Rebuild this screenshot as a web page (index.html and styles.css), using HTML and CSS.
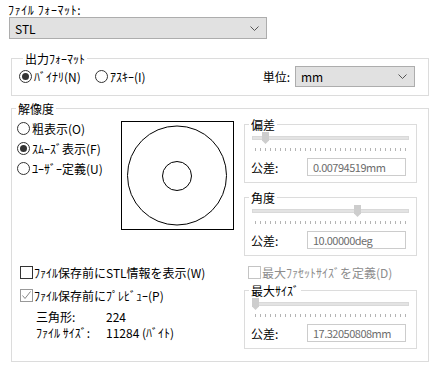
FILE: index.html
```html
<!DOCTYPE html>
<html lang="ja">
<head>
<meta charset="utf-8">
<link rel="stylesheet" href="styles.css">
</head>
<body>
<div class="file-label">ﾌｧｲﾙ ﾌｫｰﾏｯﾄ:</div>
<div class="select select-file"><span>STL</span><svg class="chev" width="9" height="5" viewBox="0 0 9 5"><polyline points="0.5,0.5 4.5,4.5 8.5,0.5" fill="none" stroke="#555" stroke-width="1"/></svg></div>

<fieldset class="grp grp-out">
  <legend>出力ﾌｫｰﾏｯﾄ</legend>
  <div class="out-row">
    <label class="radio r-bin"><span class="rb on"></span>ﾊﾞｲﾅﾘ(N)</label>
    <label class="radio"><span class="rb"></span>ｱｽｷｰ(I)</label>
    <span class="unit">単位:</span>
    <div class="select select-unit"><span>mm</span><svg class="chev" width="9" height="5" viewBox="0 0 9 5"><polyline points="0.5,0.5 4.5,4.5 8.5,0.5" fill="none" stroke="#555" stroke-width="1"/></svg></div>
  </div>
</fieldset>

<fieldset class="grp grp-res">
  <legend>解像度</legend>
  <div class="res-grid">
    <div class="res-left">
      <div class="radios">
        <label class="radio rrow"><span class="rb"></span>粗表示(O)</label>
        <label class="radio rrow"><span class="rb on"></span>ｽﾑｰｽﾞ表示(F)</label>
        <label class="radio rrow"><span class="rb"></span>ﾕｰｻﾞｰ定義(U)</label>
      </div>
      <svg class="preview" width="113" height="109" viewBox="0 0 113 109">
        <rect x="0.5" y="0.5" width="112" height="108" fill="#fff" stroke="#000"/>
        <circle cx="56" cy="54.5" r="49.5" fill="none" stroke="#000"/>
        <circle cx="56" cy="55" r="14.5" fill="none" stroke="#000"/>
      </svg>
    </div>
    <div class="res-right">
      <fieldset class="grp sub sub-dev">
        <legend>偏差</legend>
        <div class="slider"><div class="track"></div><svg class="thumb" style="left:10px" width="7" height="12" viewBox="0 0 7 12"><polygon points="0,0 7,0 7,8.5 3.5,12 0,8.5" fill="#cdcdcd"/></svg></div>
        <div class="ticks"></div>
        <div class="tol-row"><span class="tol">公差:</span><div class="field">0.00794519mm</div></div>
      </fieldset>
      <fieldset class="grp sub sub-ang">
        <legend>角度</legend>
        <div class="slider"><div class="track"></div><svg class="thumb" style="left:102px" width="7" height="12" viewBox="0 0 7 12"><polygon points="0,0 7,0 7,8.5 3.5,12 0,8.5" fill="#cdcdcd"/></svg></div>
        <div class="ticks"></div>
        <div class="tol-row"><span class="tol">公差:</span><div class="field">10.00000deg</div></div>
      </fieldset>
    </div>
    <div class="opt-left">
      <label class="check crow"><span class="cb"></span>ﾌｧｲﾙ保存前にSTL情報を表示(W)</label>
      <label class="check crow crow2"><span class="cb on"><svg width="11" height="11" viewBox="0 0 11 11"><polyline points="1.5,5.5 4,8.5 9.5,1.5" fill="none" stroke="#888" stroke-width="1"/></svg></span>ﾌｧｲﾙ保存前にﾌﾟﾚﾋﾞｭｰ(P)</label>
      <div class="info info1"><span class="k">三角形:</span><span>224</span></div>
      <div class="info"><span class="k">ﾌｧｲﾙ ｻｲｽﾞ:</span><span>11284 (ﾊﾞｲﾄ)</span></div>
    </div>
    <div class="opt-right">
      <label class="check crow dis"><span class="cb"></span>最大ﾌｧｾｯﾄｻｲｽﾞを定義(D)</label>
      <fieldset class="grp sub sub-max">
        <legend>最大ｻｲｽﾞ</legend>
        <div class="slider"><div class="track"></div><svg class="thumb" style="left:0px" width="7" height="12" viewBox="0 0 7 12"><polygon points="0,0 7,0 7,8.5 3.5,12 0,8.5" fill="#cdcdcd"/></svg></div>
        <div class="ticks"></div>
        <div class="tol-row"><span class="tol">公差:</span><div class="field">17.32050808mm</div></div>
      </fieldset>
    </div>
  </div>
</fieldset>
</body>
</html>
```
FILE: styles.css
```css
* { box-sizing: border-box; }
body {
  margin: 0;
  width: 445px;
  height: 367px;
  overflow: hidden;
  background: #fff;
  color: #000;
  font-family: "Noto Sans CJK JP", "MS UI Gothic", sans-serif;
  font-size: 12px;
  line-height: 15px;
}
.file-label { margin: 2px 0 0 8px; height: 15px; letter-spacing: 0.6px; }
.select {
  display: flex;
  align-items: center;
  justify-content: space-between;
  border: 1px solid #adadad;
  background: #e1e1e1;
  padding: 0 7px 0 5px;
}
.select-file { margin: 0 0 0 9px; width: 258px; height: 22px; }
.chev { display: block; }

.grp {
  border: 1px solid #dcdcdc;
  min-width: 0;
}
legend { margin-left: 4px; padding: 0 2px; line-height: 15px; }

.grp-out { margin: 12px 0 0 11px; width: 418px; padding: 0 13px 8px 7px; }
.out-row { display: flex; align-items: center; height: 21px; }
.radio { display: flex; align-items: center; gap: 2px; white-space: nowrap; }
.rb {
  width: 13px; height: 13px;
  border: 1px solid #333;
  border-radius: 50%;
  background: #fff;
  display: flex; align-items: center; justify-content: center;
  flex: none;
}
.rb.on::after {
  content: "";
  width: 7px; height: 7px;
  border-radius: 50%;
  background: #333;
}
.r-bin { width: 76px; }
.unit { margin-left: auto; margin-right: 5px; }
.select-unit { width: 120px; height: 21px; }

.grp-res { margin: 5px 0 0 11px; width: 418px; height: 261px; padding: 0 11px 0 0; }
.res-grid {
  display: grid;
  grid-template-columns: 232px 173px;
}
.res-left { display: flex; }
.radios { margin: 2px 0 0 5px; width: 104px; }
.rrow { height: 20px; }
.preview { display: block; margin-top: 5px; }

.res-right { display: flex; flex-direction: column; }
.sub { margin: 0; padding: 0 0 6px 0; }
.sub-dev { margin-top: 1px; }
.sub-ang { margin-top: 7px; }
.sub-max { margin-top: 1px; }
.slider { position: relative; height: 12px; margin: 0 7px; }
.track {
  position: absolute; left: 0; right: 0; top: 4px; height: 4px;
  background: #e3e3e3; border: 1px solid #d9d9d9;
}
.thumb { position: absolute; top: 0; }
.ticks {
  margin: 4px 10px 0 10px;
  height: 3px;
  background: repeating-linear-gradient(to right, #b4b4b4 0 1px, transparent 1px 5px);
}
.tol-row { display: flex; align-items: center; margin-top: 7px; padding: 0 10px 0 6px; height: 18px; }
.tol { flex: 1; }
.field {
  width: 99px; height: 18px;
  border: 1px solid #cccccc;
  background: #fff;
  color: #6d6d6d;
  padding-left: 5px;
  font-size: 11px;
  letter-spacing: -0.5px;
  line-height: 16px;
}

.opt-left { margin-top: 6px; padding-left: 8px; }
.check { display: flex; align-items: center; gap: 1px; white-space: nowrap; }
.crow { height: 20px; }
.crow2 { margin-top: 3px; }
.cb {
  width: 13px; height: 13px;
  border: 1px solid #333;
  background: #fff;
  flex: none;
  display: flex; align-items: center; justify-content: center;
}
.cb.on { border-color: #999; }
.cb svg { display: block; }
.info { display: flex; padding-left: 16px; height: 16px; line-height: 16px; }
.info1 { margin-top: 4px; }
.k { width: 70px; }
.opt-right { margin-top: 6px; display: flex; flex-direction: column; }
.opt-right .check { padding-left: 4px; }
.dis { color: #8d8d8d; }
.dis .cb { border-color: #c4c4c4; }
```
